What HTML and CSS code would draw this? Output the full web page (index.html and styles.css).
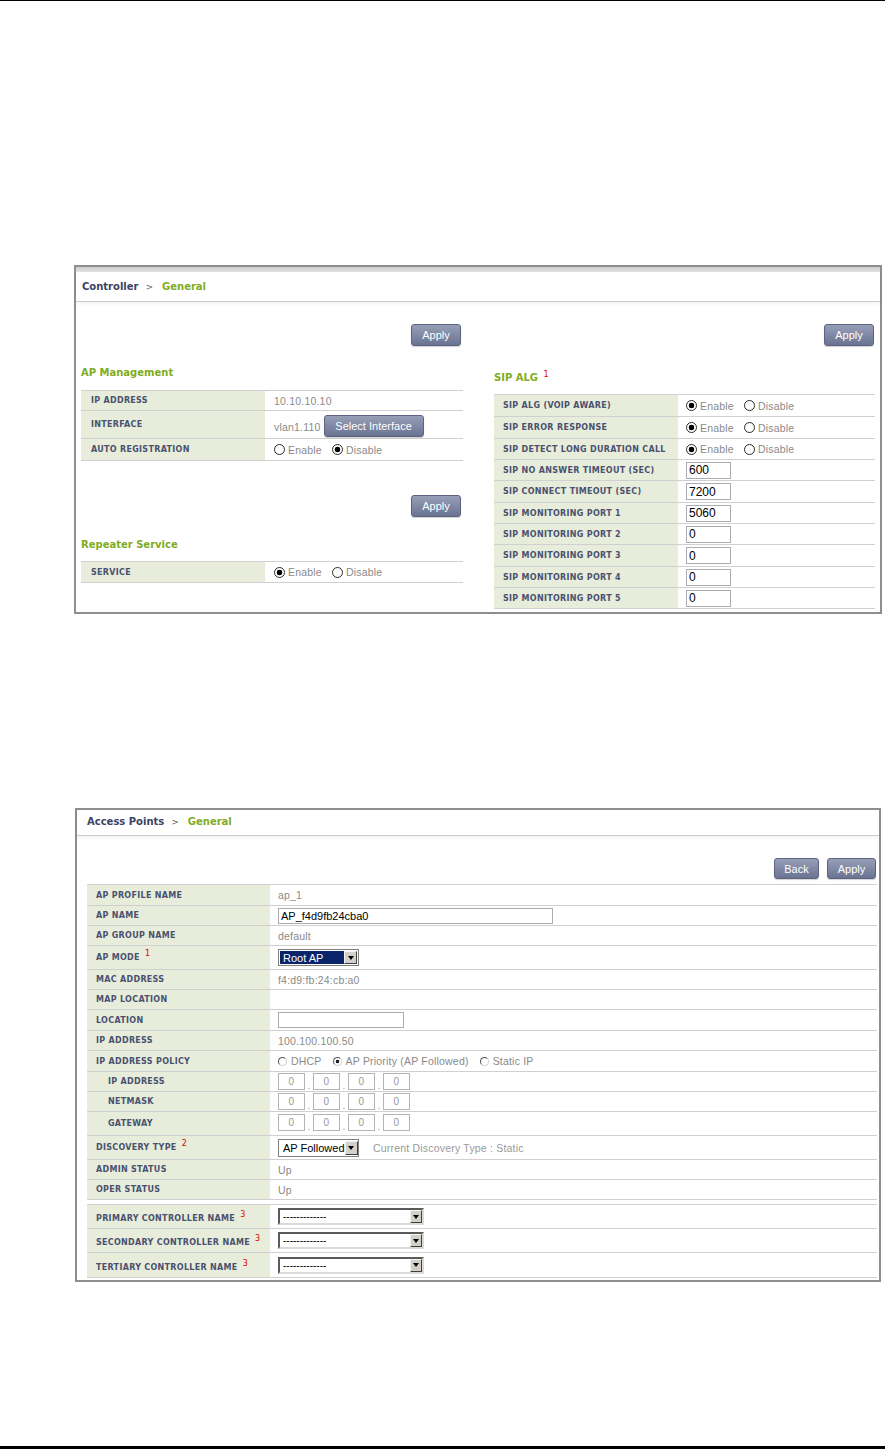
FILE: index.html
```html
<!DOCTYPE html>
<html>
<head>
<meta charset="utf-8">
<title>Controller / Access Points</title>
<link rel="stylesheet" href="styles.css">
</head>
<body>
<div class="rule-top"></div>

<section class="panel p1">
  <div class="band"></div>
  <div class="crumb crumb1"><span class="crumb-a">Controller</span><span class="crumb-sep">&gt;</span><span class="crumb-b">General</span></div>
  <div class="cols">
    <div class="col col-l">
      <div class="btnrow br-1"><button class="btn w50">Apply</button></div>
      <h3 class="sec sec-apm">AP Management</h3>
      <div class="tbl t-apm">
        <div class="row r20"><div class="lab"><span>IP ADDRESS</span></div><div class="val">10.10.10.10</div></div>
        <div class="row r28"><div class="lab"><span>INTERFACE</span></div><div class="val val-iface"><span class="iface-txt">vlan1.110</span><button class="btn btn-iface">Select Interface</button></div></div>
        <div class="row r22"><div class="lab"><span>AUTO REGISTRATION</span></div><div class="val"><span class="ropt"><span class="rad"></span>Enable</span><span class="ropt"><span class="rad on"></span>Disable</span></div></div>
      </div>
      <div class="btnrow br-2"><button class="btn w50">Apply</button></div>
      <h3 class="sec sec-rep">Repeater Service</h3>
      <div class="tbl t-rep">
        <div class="row r21"><div class="lab"><span>SERVICE</span></div><div class="val"><span class="ropt"><span class="rad on"></span>Enable</span><span class="ropt"><span class="rad"></span>Disable</span></div></div>
      </div>
    </div>

    <div class="col col-r">
      <div class="btnrow br-r"><button class="btn w50">Apply</button></div>
      <h3 class="sec sec-sip">SIP ALG <sup class="sup">1</sup></h3>
      <div class="tbl t-sip">
        <div class="row r22"><div class="lab labr"><span>SIP ALG (VOIP AWARE)</span></div><div class="val valr"><span class="ropt"><span class="rad on"></span>Enable</span><span class="ropt"><span class="rad"></span>Disable</span></div></div>
        <div class="row r22"><div class="lab labr"><span>SIP ERROR RESPONSE</span></div><div class="val valr"><span class="ropt"><span class="rad on"></span>Enable</span><span class="ropt"><span class="rad"></span>Disable</span></div></div>
        <div class="row r21"><div class="lab labr"><span>SIP DETECT LONG DURATION CALL</span></div><div class="val valr"><span class="ropt"><span class="rad on"></span>Enable</span><span class="ropt"><span class="rad"></span>Disable</span></div></div>
        <div class="row r21"><div class="lab labr"><span>SIP NO ANSWER TIMEOUT (SEC)</span></div><div class="val valr"><input class="inp inp-sip" type="text" value="600"></div></div>
        <div class="row r22"><div class="lab labr"><span>SIP CONNECT TIMEOUT (SEC)</span></div><div class="val valr"><input class="inp inp-sip" type="text" value="7200"></div></div>
        <div class="row r21"><div class="lab labr"><span>SIP MONITORING PORT 1</span></div><div class="val valr"><input class="inp inp-sip" type="text" value="5060"></div></div>
        <div class="row r21"><div class="lab labr"><span>SIP MONITORING PORT 2</span></div><div class="val valr"><input class="inp inp-sip" type="text" value="0"></div></div>
        <div class="row r22"><div class="lab labr"><span>SIP MONITORING PORT 3</span></div><div class="val valr"><input class="inp inp-sip" type="text" value="0"></div></div>
        <div class="row r21"><div class="lab labr"><span>SIP MONITORING PORT 4</span></div><div class="val valr"><input class="inp inp-sip" type="text" value="0"></div></div>
        <div class="row r21"><div class="lab labr"><span>SIP MONITORING PORT 5</span></div><div class="val valr"><input class="inp inp-sip" type="text" value="0"></div></div>
      </div>
    </div>
  </div>
</section>

<section class="panel p2">
  <div class="crumb crumb2"><span class="crumb-a">Access Points</span><span class="crumb-sep">&gt;</span><span class="crumb-b">General</span></div>
  <div class="inner2">
    <div class="btnrow br-p2"><button class="btn btn-back">Back</button><button class="btn btn-apply2">Apply</button></div>
    <div class="tbl t-ap">
      <div class="row r21"><div class="lab lab2"><span>AP PROFILE NAME</span></div><div class="val val2">ap_1</div></div>
      <div class="row r20"><div class="lab lab2"><span>AP NAME</span></div><div class="val val2"><input class="inp inp-name" type="text" value="AP_f4d9fb24cba0"></div></div>
      <div class="row r20"><div class="lab lab2"><span>AP GROUP NAME</span></div><div class="val val2">default</div></div>
      <div class="row r24"><div class="lab lab2"><span>AP MODE <sup class="sup">1</sup></span></div><div class="val val2"><span class="sel sel-mode"><span class="sel-v sel-dark">Root AP</span><span class="sel-b"><span class="tri"></span></span></span></div></div>
      <div class="row r20"><div class="lab lab2"><span>MAC ADDRESS</span></div><div class="val val2">f4:d9:fb:24:cb:a0</div></div>
      <div class="row r20"><div class="lab lab2"><span>MAP LOCATION</span></div><div class="val val2"></div></div>
      <div class="row r21"><div class="lab lab2"><span>LOCATION</span></div><div class="val val2"><input class="inp inp-loc" type="text" value=""></div></div>
      <div class="row r20"><div class="lab lab2"><span>IP ADDRESS</span></div><div class="val val2">100.100.100.50</div></div>
      <div class="row r21"><div class="lab lab2"><span>IP ADDRESS POLICY</span></div><div class="val val2"><span class="ropt2"><span class="rad2"></span>DHCP</span><span class="ropt2"><span class="rad2 on"></span>AP Priority (AP Followed)</span><span class="ropt2"><span class="rad2"></span>Static IP</span></div></div>
      <div class="row r20"><div class="lab lab2 lab-ind"><span>IP ADDRESS</span></div><div class="val val2"><span class="oct">0</span><span class="dot">.</span><span class="oct">0</span><span class="dot">.</span><span class="oct">0</span><span class="dot">.</span><span class="oct">0</span></div></div>
      <div class="row r20"><div class="lab lab2 lab-ind"><span>NETMASK</span></div><div class="val val2"><span class="oct">0</span><span class="dot">.</span><span class="oct">0</span><span class="dot">.</span><span class="oct">0</span><span class="dot">.</span><span class="oct">0</span></div></div>
      <div class="row r24 al-top"><div class="lab lab2 lab-ind"><span>GATEWAY</span></div><div class="val val2"><span class="oct">0</span><span class="dot">.</span><span class="oct">0</span><span class="dot">.</span><span class="oct">0</span><span class="dot">.</span><span class="oct">0</span></div></div>
      <div class="row r24"><div class="lab lab2"><span>DISCOVERY TYPE <sup class="sup">2</sup></span></div><div class="val val2"><span class="sel sel-disc"><span class="sel-v">AP Followed</span><span class="sel-b"><span class="tri"></span></span></span><span class="curdisc">Current Discovery Type : Static</span></div></div>
      <div class="row r20"><div class="lab lab2"><span>ADMIN STATUS</span></div><div class="val val2">Up</div></div>
      <div class="row r20"><div class="lab lab2"><span>OPER STATUS</span></div><div class="val val2">Up</div></div>
    </div>
    <div class="tbl t-ctl">
      <div class="row r24"><div class="lab lab2 lab-low"><span>PRIMARY CONTROLLER NAME <sup class="sup">3</sup></span></div><div class="val val2"><span class="sel sel-ctl"><span class="sel-v">-------------</span><span class="sel-b"><span class="tri"></span></span></span></div></div>
      <div class="row r24"><div class="lab lab2 lab-low"><span>SECONDARY CONTROLLER NAME <sup class="sup">3</sup></span></div><div class="val val2"><span class="sel sel-ctl"><span class="sel-v">-------------</span><span class="sel-b"><span class="tri"></span></span></span></div></div>
      <div class="row r25"><div class="lab lab2 lab-low"><span>TERTIARY CONTROLLER NAME <sup class="sup">3</sup></span></div><div class="val val2"><span class="sel sel-ctl"><span class="sel-v">-------------</span><span class="sel-b"><span class="tri"></span></span></span></div></div>
    </div>
  </div>
</section>

<div class="rule-bottom"></div>
</body>
</html>
```

FILE: styles.css
```css
* { box-sizing: border-box; }
html, body { margin: 0; padding: 0; background: #fff; }
body {
  width: 885px;
  font-family: "Liberation Sans", Arial, sans-serif;
  color: #333;
}

.rule-top { height: 1px; background: #000; }
.rule-bottom { height: 3px; background: #000; margin-top: 164px; }

/* panels */
.panel { border: 2px solid #8e8e8e; background: #fff; }
.p1 { margin: 264px 0 0 74px; width: 808px; }
.p2 { margin: 194px 0 0 75px; width: 806px; }

.band { height: 5px; background: linear-gradient(#cdcdcd, #e3e3e3); }

.crumb {
  display: flex;
  align-items: center;
  font-family: "DejaVu Sans", Verdana, sans-serif;
  font-weight: bold;
  font-size: 10px;
  border-bottom: 1px solid #cdcdcd;
  box-shadow: 0 2px 4px rgba(0, 0, 0, 0.05);
}
.crumb1 { height: 30px; padding-left: 6px; }
.crumb2 { height: 26px; padding: 0 0 2px 10px; }
.crumb-a { color: #3d4363; }
.crumb-sep { color: #666; font-weight: normal; font-size: 9px; margin: 0 9px 0 7px; }
.crumb-b { color: #80ad25; }

/* columns */
.cols { display: flex; align-items: flex-start; gap: 31px; padding: 0 5px 3px 5px; }
.col-l { width: 382px; }
.col-r { width: 381px; }

.inner2 { padding: 0 2px 2px 10px; }

.btnrow { display: flex; justify-content: flex-end; gap: 8px; }
.br-1 { margin-top: 22px; padding-right: 2px; }
.br-2 { margin-top: 34px; padding-right: 2px; }
.br-r { margin-top: 22px; padding-right: 1px; }
.br-p2 { margin-top: 22px; padding-right: 1px; }

.btn {
  font-family: "Liberation Sans", Arial, sans-serif;
  font-size: 11px;
  color: #fff;
  height: 22px;
  padding: 0;
  margin: 0;
  border: 1px solid #5b6380;
  border-radius: 3px;
  background: linear-gradient(#979fb7, #6a7392);
  box-shadow: 0 1px 1px rgba(0, 0, 0, 0.18);
}
.w50 { width: 50px; }
.btn-back { width: 45px; height: 21px; }
.btn-apply2 { width: 49px; height: 21px; }
.btn-iface { width: 100px; margin: 0 0 1px 3px; }

.sec {
  margin: 0;
  height: 16px;
  line-height: 16px;
  font-family: "DejaVu Sans", Verdana, sans-serif;
  font-weight: bold;
  font-size: 10px;
  color: #7fac22;
}
.sec-apm { margin-top: 19px; }
.sec-rep { margin-top: 20px; }
.sec-sip { margin-top: 24px; }

.sup {
  font-family: "DejaVu Sans", Verdana, sans-serif;
  font-weight: normal;
  font-size: 8px;
  color: #e00000;
  vertical-align: 4px;
  line-height: 0;
  margin-left: 2px;
}

/* tables */
.tbl { border-top: 1px solid #d0d0d0; }
.t-apm { margin-top: 9px; }
.t-rep { margin-top: 8px; }
.t-sip { margin-top: 8px; }
.t-ap { margin-top: 5px; }
.t-ctl { margin-top: 4px; }

.row { display: flex; border-bottom: 1px solid #d0d0d0; }
.r20 { height: 20px; }
.r21 { height: 21px; }
.r22 { height: 22px; }
.r24 { height: 24px; }
.r25 { height: 25px; }
.r28 { height: 28px; }

.lab {
  flex: none;
  width: 184px;
  background: #e7edda;
  padding-left: 10px;
  display: flex;
  align-items: center;
  font-family: "DejaVu Sans", Verdana, sans-serif;
  font-weight: bold;
  font-size: 8px;
  letter-spacing: 0.3px;
  color: #4a5170;
  white-space: nowrap;
}
.labr { padding-left: 9px; }
.lab2 { width: 183px; padding-left: 9px; }
.lab-ind { padding-left: 21px; }
.lab-low { padding-top: 4px; }

.val {
  flex: 1;
  display: flex;
  align-items: center;
  padding-left: 9px;
  font-size: 10.5px;
  letter-spacing: 0.2px;
  color: #8a8a8a;
  white-space: nowrap;
}
.valr { padding-left: 8px; }
.val2 { padding-left: 8px; }
.val-iface { align-items: flex-end; }
.iface-txt { margin-bottom: 5px; }
.al-top .val { align-items: flex-start; padding-top: 2px; }

/* radios */
.ropt { display: inline-flex; align-items: center; margin-right: 10px; }
.rad {
  width: 11px;
  height: 11px;
  margin-right: 3px;
  border: 1px solid #2a2a2a;
  border-radius: 50%;
  background: #fff;
}
.rad.on { background: radial-gradient(circle, #000 0 2.6px, #fff 3.1px); }

.ropt2 { display: inline-flex; align-items: center; margin-right: 11px; }
.rad2 {
  width: 9px;
  height: 9px;
  margin-right: 4px;
  border: 1px solid;
  border-color: #555 #cfcfcf #cfcfcf #555;
  border-radius: 50%;
  background: #fff;
}
.rad2.on { background: radial-gradient(circle, #222 0 1.6px, #fff 2.1px); }

/* inputs */
.inp {
  margin: 0;
  padding: 0 2px;
  height: 17px;
  border: 1px solid #a9acb0;
  background: #fff;
  color: #000;
  font-family: "Liberation Sans", Arial, sans-serif;
  font-size: 12px;
  outline: none;
}
.inp-sip { width: 45px; }
.inp-name { width: 275px; height: 16px; font-size: 11px; }
.inp-loc { width: 126px; height: 16px; }

.oct {
  width: 27px;
  height: 17px;
  border: 1px solid #b4b4b4;
  display: flex;
  align-items: center;
  justify-content: center;
  font-size: 10px;
  color: #999;
}
.dot { width: 8px; align-self: flex-end; text-align: center; font-size: 10px; color: #999; line-height: 10px; }
.al-top .dot { align-self: flex-start; margin-top: 8px; }

/* selects */
.sel {
  display: inline-flex;
  height: 17px;
  padding: 1px;
  border: 1px solid #7f7f7f;
  background: #fff;
  letter-spacing: 0;
}
.sel-v {
  flex: 1;
  display: flex;
  align-items: center;
  padding-left: 3px;
  font-family: "Liberation Sans", Arial, sans-serif;
  font-size: 11px;
  color: #000;
}
.sel-dark { background: #0a246a; color: #fff; }
.sel-b {
  flex: none;
  width: 13px;
  display: flex;
  align-items: center;
  justify-content: center;
  background: #d4d0c8;
  border: 1px solid;
  border-color: #f4f4f4 #404040 #404040 #f4f4f4;
}
.tri { width: 0; height: 0; border-left: 3px solid transparent; border-right: 3px solid transparent; border-top: 4px solid #000; }

.sel-mode { width: 81px; }
.sel-disc { width: 81px; height: 18px; }
.sel-ctl {
  width: 146px;
  height: 17px;
  padding: 0;
  border: 2px solid;
  border-color: #5a5a5a #dadada #dadada #5a5a5a;
}
.sel-ctl .sel-v { font-size: 10px; }
.sel-ctl .sel-b { width: 12px; }

.curdisc { margin-left: 14px; color: #999; }
```
